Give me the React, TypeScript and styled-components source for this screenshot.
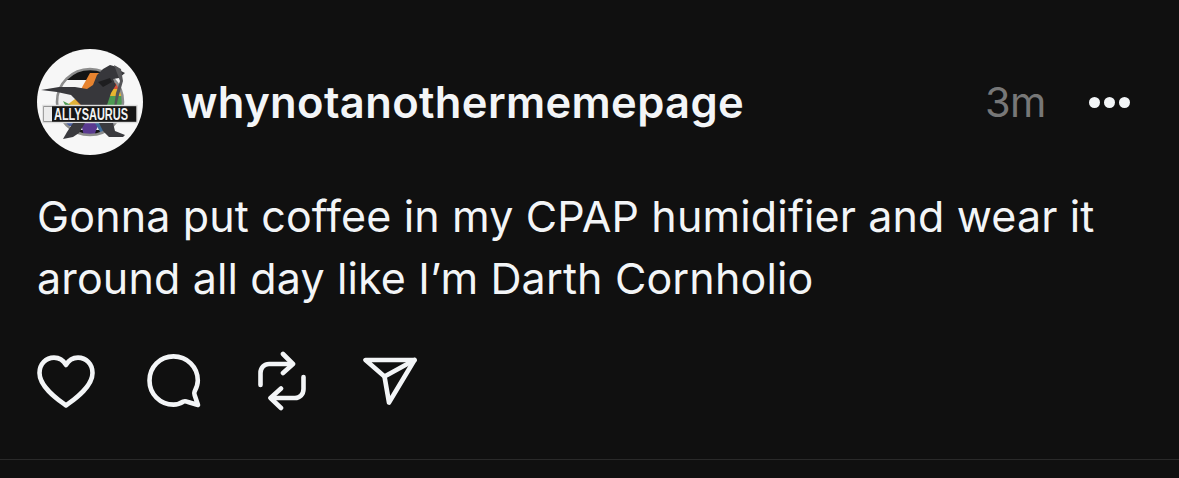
import React from "react";
import styled, { createGlobalStyle } from "styled-components";

const Global = createGlobalStyle`
  html, body { margin: 0; padding: 0; background: #101010; }
  body { font-family: Inter, "Liberation Sans", sans-serif; }
`;
const Page = styled.main`
  width: 1179px; height: 478px; box-sizing: border-box; background: #101010; overflow: hidden;
  display: flex; flex-direction: column;
`;
const Post = styled.article`
  height: 460px; box-sizing: border-box; padding: 49px 0 0 37px;
  border-bottom: 1px solid #2a2a2a; display: flex; flex-direction: column;
`;
const Header = styled.header`display: flex; align-items: center; height: 106px;`;
const Avatar = styled.svg`width: 106px; height: 106px; flex: none;`;
const Name = styled.span`
  margin-left: 38px; font-size: 43.5px; font-weight: 600; color: #f3f5f7; letter-spacing: 0.36px; width: 804px; white-space: nowrap;
`;
const Time = styled.span`font-size: 41.5px; color: #777; letter-spacing: -0.6px; width: 104px; white-space: nowrap;`;
const Dots = styled.span`display: flex; gap: 4px;`;
const Dot = styled.i`width: 11px; height: 11px; border-radius: 50%; background: #f3f5f7; display: block;`;
const Body = styled.p`
  margin: 30px 0 0; font-size: 43px; line-height: 62px; color: #f3f5f7; letter-spacing: 0.14px; white-space: pre-line; font-weight: 400;
`;
const Actions = styled.div`
  margin-top: 42px; display: grid; grid-template-columns: 110px 111px 105px auto; align-items: center; justify-items: start; height: 60px;
`;
const Icon = styled.svg`display: block; fill: none; stroke: #f3f5f7; stroke-width: 4.6; stroke-linecap: round; stroke-linejoin: round;`;

const Logo = () => (
  <Avatar viewBox="0 0 106 106" role="img" aria-label="Allysaurus">
    <defs>
      <clipPath id="ring"><circle cx="53" cy="53" r="33" /></clipPath>
    </defs>
    <circle cx="53" cy="53" r="53" fill="#f7f7f7" />
    <g clipPath="url(#ring)">
      <rect x="20" y="20" width="66" height="11" fill="#141414" />
      <rect x="20" y="31" width="66" height="10" fill="#f5f5f5" />
      <rect x="20" y="41" width="66" height="17" fill="#f0f0f0" />
      <polygon points="33,60 53,24 66,24 66,42 50,60" fill="#e7832f" />
      <polygon points="60,34 84,34 84,40 60,40" fill="#d9533a" />
      <polygon points="64,40 86,40 86,47 64,47" fill="#e7b52f" />
      <polygon points="64,47 86,47 86,58 64,58" fill="#4c9a52" />
      <rect x="20" y="74" width="66" height="3" fill="#4a5fa0" />
      <rect x="20" y="77" width="66" height="4" fill="#ededed" />
      <rect x="20" y="81" width="66" height="6" fill="#151515" />
      <polygon points="44,74 62,74 55,92 48,92" fill="#5a3a90" />
      <polygon points="58,74 72,74 66,88" fill="#3e6d9c" />
    </g>
    <circle cx="53" cy="53" r="33" fill="none" stroke="#8d8d8d" strokeWidth="2.6" />
    <polygon points="30,56 38,50 44,58 38,56" fill="#e0b23a" />
    <polygon points="26,52 34,56 30,60" fill="#4c9a52" />
    <path d="M4 41 L22 38 L38 38 L50 40 L56 36 L60 26 L66 20 L73 16 L80 18 L84 22 L88 24 L82 29 L76 30 L79 36 L74 44 L70 56 H44 L34 46 L20 43 Z" fill="#37373b" />
    <path d="M61 33 L73 29 L75 33 L66 38 Z" fill="#1e1e20" />
    <path d="M77 16 L84 20 L86 32 L82 46 L79 58 L77 58 L79 44 L83 32 Z" fill="#555558" />
    <rect x="6" y="56.5" width="94" height="17" fill="#161616" stroke="#dcdcdc" strokeWidth="1.4" />
    <rect x="7" y="57.5" width="8" height="15" fill="#ececec" />
    <text transform="translate(54 71) scale(1 1.55)" textAnchor="middle" fontFamily="Liberation Sans, sans-serif" fontSize="11" fontWeight="700" fill="#f2f2f2">ALLYSAURUS</text>
    <path d="M36 74 L48 74 L42 84 L36 88 L26 90 L30 83 Z" fill="#3a3a3e" />
    <path d="M62 74 L76 74 L78 82 L88 86 L86 88 L72 88 L66 82 Z" fill="#3a3a3e" />
  </Avatar>
);

export default function App() {
  return (
    <Page>
      <Global />
      <Post>
        <Header>
          <Logo />
          <Name>whynotanothermemepage</Name>
          <Time>3m</Time>
          <Dots><Dot /><Dot /><Dot /></Dots>
        </Header>
        <Body>{"Gonna put coffee in my CPAP humidifier and wear it\naround all day like I’m Darth Cornholio"}</Body>
        <Actions>
          <Icon width="58" height="53" viewBox="0 0 58 53" aria-label="Like">
            <path d="M29 50.5 C 24 46.5 2.5 33 2.5 18 C 2.5 9 9 2.6 17 2.6 C 22.5 2.6 26.5 5.4 29 10 C 31.5 5.4 35.5 2.6 41 2.6 C 49 2.6 55.5 9 55.5 18 C 55.5 33 34 46.5 29 50.5 Z" />
          </Icon>
          <Icon width="54" height="54" viewBox="0 0 54 54" aria-label="Reply">
            <path d="M36.5 47.5 C 33.5 49.5 30 50.6 26.5 50.6 C 13 50.6 2.5 40 2.5 26.5 C 2.5 13 13 2.4 26.5 2.4 C 40 2.4 50.8 13 50.8 26.5 C 50.8 30.5 49.5 34 47.6 37.5 C 47.2 38.5 47 39.5 47.6 41 L 51 51 L 41 48 C 39.5 47.3 38 46.8 36.5 47.5 Z" />
          </Icon>
          <Icon width="48" height="60" viewBox="0 0 48 60" aria-label="Repost">
            <path d="M2.5 34 V22 C 2.5 16.5 6.5 13 11 13 H 34" />
            <path d="M25 3 L 35 13 L 25 22" />
            <path d="M45.5 26 V38 C 45.5 43.5 41.5 47 37 47 H 13" />
            <path d="M23 37.5 L 12.5 47 L 23 57" />
          </Icon>
          <Icon width="54" height="48" viewBox="0 0 54 48" aria-label="Share">
            <path d="M2.5 3 H 51.5 L 26 45.5 L 21.5 19.5 Z" />
            <path d="M21.5 19.5 L 51.5 3" />
          </Icon>
        </Actions>
      </Post>
    </Page>
  );
}
